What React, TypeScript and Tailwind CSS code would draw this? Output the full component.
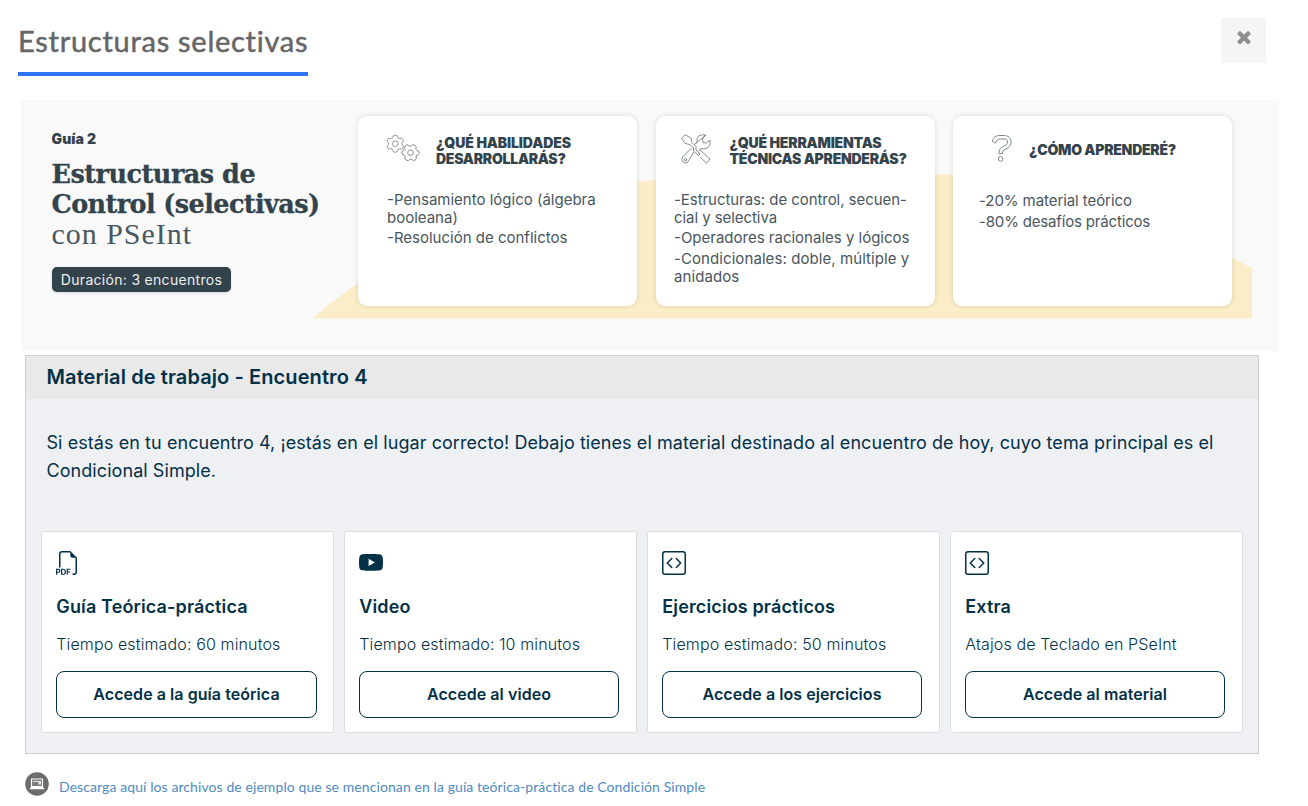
import React from "react";
import { BsCodeSquare, BsFiletypePdf, BsYoutube } from "react-icons/bs";

const GEAR =
  "M-2.200 -7.800Q0 -9.500 2.200 -7.800L2.800 -5.700 4.600 -5 6.600 -5.400Q8.500 -4 7.800 -2L6.400 0 7.800 2Q8.500 4 6.600 5.400L4.600 5 2.800 5.700 2.200 7.800Q0 9.500 -2.200 7.800L-2.800 5.700 -4.600 5 -6.600 5.400Q-8.500 4 -7.800 2L-6.400 0 -7.800 -2Q-8.500 -4 -6.600 -5.400L-4.600 -5 -2.800 -5.700Z";

function Gears() {
  return (
    <svg className="h-[30px] w-[34px]" viewBox="0 0 34 30" fill="none" stroke="#7d868b" strokeWidth="0.85" strokeLinejoin="round">
      <g transform="translate(9.300 9.700)"><path d={GEAR} /><circle r="2.800" /></g>
      <g transform="translate(24.500 18.700) rotate(30)"><path d={GEAR} /><circle r="2.800" /></g>
    </svg>
  );
}

function Tools() {
  return (
    <svg className="h-[30px] w-[30px]" viewBox="0 0 30 30" fill="none" stroke="#6f797e" strokeWidth="0.85" strokeLinejoin="round" strokeLinecap="round">
      <path d="M.8 4 4 .8 10 4 11 8.500 15 12.500V16L19 20 17.500 21.500 12.500 17V13.500L8.500 10.500 4.500 9.500Z" />
      <path d="M18.500 15.500 29 25 25.500 29.200 19.500 23.500" />
      <path d="M24.500 1 21.500 5 22 8.500 25.500 9 29 6Q30 11.500 26 14 22.500 15.500 20 14.500L18 16.500M12.500 18.500 6.500 28.500Q3.500 30 1.500 27.500.2 25 1.500 23L10 14.500M14 10 16 8.500Q15 4 18 1.800 21 0 24.500 1Z" />
      <circle cx="4.500" cy="25.700" r="1.200" />
    </svg>
  );
}

function Question() {
  return (
    <svg className="h-[27px] w-5" viewBox="0 0 20 27" fill="none" stroke="#6f797e" strokeWidth="0.9" strokeLinejoin="round">
      <path d="M.5 6C1 2 4 .5 8 .5h4c4 0 7 2.500 7 6.500 0 4-2 5.500-5 7-3 1.400-3.500 2-3.500 4.500H7c0-4 1-5.500 4.500-7.200C14 10 15.500 9.500 15.500 7S14 4 12 4H8C6 4 4.500 5 4 7.500 2.500 8.500 1 7.500.5 6Z" />
      <circle cx="8.700" cy="24" r="2.300" />
    </svg>
  );
}

function Laptop() {
  return (
    <svg className="size-6" viewBox="0 0 24 24">
      <circle cx="12" cy="12" r="11.800" fill="#6d6d6d" />
      <path d="M6.500 7h11v7.500h-11z" fill="#7c7c7c" stroke="#fff" strokeWidth="1.100" />
      <path d="M8 9h8v1H8zM13.500 10h2.500v2.500h-2.500z" fill="#e4e4e4" />
      <path d="M6 14.800h12.200l1.300 2.400h-15z" fill="#fff" />
    </svg>
  );
}

const heading = "font-[Inter,sans-serif] text-[14px] font-black leading-4 text-[#33434c]";
const body = "font-[Inter,sans-serif] text-[15px] leading-[18px] text-[#4a565d]";
const infoCard = "h-[190px] w-[279px] shrink-0 rounded-[9px] bg-white shadow-[0_0_5px_rgba(70,70,60,0.18)]";

function Banner() {
  return (
    <section className="relative ml-[21px] mt-6 h-[251px] w-[1258px] bg-[#f9f9f9]">
      <svg className="absolute left-0 top-0 h-[219px] w-[1231px]" viewBox="0 0 1231 219">
        <path d="M291 218.500C392 135 500 88 635 80C705 77 735 95 795 95C850 95 870 70 930 75C1030 80 1140 120 1231 168V218.500Z" fill="#faedc7" />
      </svg>
      <div className="relative flex pl-[30px] pt-4">
        <div className="w-[307px] shrink-0 pl-[0.500px] pt-[15px] text-[#33434c]">
          <p className="font-[Inter,sans-serif] text-[14px] font-black leading-4 tracking-[0.100px]">Guía 2</p>
          <h1 className="mt-3 whitespace-nowrap font-['DejaVu_Serif',serif] text-[25.500px] font-bold leading-[30px] tracking-[-0.600px] [-webkit-text-stroke:0.300px_#33434c]">
            <span className="block tracking-[-0.500px]">Estructuras de</span>
            <span className="block">Control (selectivas)</span>
            <span className="block font-['Liberation_Serif',serif] text-[30px] font-normal tracking-[0.960px] text-[#4a585f] [-webkit-text-stroke:0px]">con PSeInt</span>
          </h1>
          <div className="mt-[18px] flex h-[25px] w-[179px] items-center justify-center rounded-[5px] bg-[#33434c] pl-px font-[Inter,sans-serif] text-[14px] tracking-[0.300px] text-[#edf0f1] shadow-sm">
            <span className="whitespace-nowrap">Duración: 3 encuentros</span>
          </div>
        </div>
        <div className="flex gap-[18.500px]">
          <article className={infoCard}>
            <div className="flex h-[65px] items-center pl-[28px]">
              <Gears />
              <h2 className={heading + " ml-4 whitespace-nowrap pt-1 tracking-[-0.100px]"}>¿QUÉ HABILIDADES<br /><span className="tracking-[-0.250px]">DESARROLLARÁS?</span></h2>
            </div>
            <div className={body + " whitespace-nowrap pl-[29px] pt-[10px]"}>
              <p>-Pensamiento lógico (álgebra<br />booleana)</p>
              <p className="mt-0.5">-Resolución de conflictos</p>
            </div>
          </article>
          <article className={infoCard}>
            <div className="flex h-[65px] items-center pl-[25px]">
              <Tools />
              <h2 className={heading + " ml-[19px] whitespace-nowrap pt-1 tracking-[-0.180px]"}>¿QUÉ HERRAMIENTAS<br /><span className="tracking-[-0.240px]">TÉCNICAS APRENDERÁS?</span></h2>
            </div>
            <div className={body + " whitespace-nowrap pl-[18.500px] pt-[10px]"}>
              <p className="tracking-[-0.060px]">-Estructuras: de control, secuen-<br />cial y selectiva</p>
              <p className="mt-0.5">-Operadores racionales y lógicos</p>
              <p className="mt-[3px] tracking-[0.080px]">-Condicionales: doble, múltiple y<br />anidados</p>
            </div>
          </article>
          <article className={infoCard}>
            <div className="flex h-[65px] items-center pl-[38.500px]">
              <Question />
              <h2 className={heading + " ml-[17.500px] whitespace-nowrap pt-0.5 tracking-[-0.240px]"}>¿CÓMO APRENDERÉ?</h2>
            </div>
            <div className={body + " whitespace-nowrap pl-[26px] pt-[11px]"}>
              <p className="tracking-[-0.070px]">-20% material teórico</p>
              <p className="mt-[2.500px] tracking-[-0.170px]">-80% desafíos prácticos</p>
            </div>
          </article>
        </div>
      </div>
    </section>
  );
}

const materials = [
  { Icon: BsFiletypePdf, title: "Guía Teórica-práctica", detail: "Tiempo estimado: 60 minutos", action: "Accede a la guía teórica", width: "w-[261px]" },
  { Icon: BsYoutube, title: "Video", detail: "Tiempo estimado: 10 minutos", action: "Accede al video", width: "w-[260px]" },
  { Icon: BsCodeSquare, title: "Ejercicios prácticos", detail: "Tiempo estimado: 50 minutos", action: "Accede a los ejercicios", width: "w-[260px]" },
  { Icon: BsCodeSquare, title: "Extra", detail: "Atajos de Teclado en PSeInt", action: "Accede al material", width: "w-[260px]" },
];

export default function App() {
  return (
    <main className="h-[806px] w-full overflow-hidden bg-white font-[Inter,sans-serif] text-[#033148]">
      <header className="flex h-[76px] justify-between pl-[18px] pr-[42px] pt-[18px]">
        <div className="h-[58px] w-[290px] border-b-4 border-[#2b74f6]">
          <h1 className="whitespace-nowrap font-[Lato,sans-serif] text-[29px] leading-[46px] tracking-[0.730px] text-[#666] [-webkit-text-stroke:0.500px_#666]">Estructuras selectivas</h1>
        </div>
        <button className="flex h-[45px] w-[45px] items-start justify-center bg-[#f5f5f5] pt-[9px]" aria-label="Cerrar">
          <svg className="ml-px size-5" viewBox="0 0 1792 1792" fill="#8f8f8f">
            <path d="M1490 1322q0 40-28 68l-136 136q-28 28-68 28t-68-28l-294-294-294 294q-28 28-68 28t-68-28l-136-136q-28-28-28-68t28-68l294-294-294-294q-28-28-28-68t28-68l136-136q28-28 68-28t68 28l294 294 294-294q28-28 68-28t68 28l136 136q28 28 28 68t-28 68l-294 294 294 294q28 28 28 68z" />
          </svg>
        </button>
      </header>
      <Banner />
      <section className="ml-[25px] mt-1 h-[399px] w-[1234px] border border-[#cecfd1] bg-[#eff0f4]">
        <h2 className="h-[43px] bg-[#e9e9e9] pl-[20.500px] text-[20px] font-semibold leading-[43px] tracking-[0.100px]">Material de trabajo - Encuentro 4</h2>
        <p className="h-[132px] whitespace-nowrap pl-[20.500px] pt-[30px] text-[18px] leading-7 tracking-[0.067px]">
          Si estás en tu encuentro 4, ¡estás en el lugar correcto! Debajo tienes el material destinado al encuentro de hoy, cuyo tema principal es el<br />Condicional Simple.
        </p>
        <div className="grid w-[1217px] grid-cols-4 gap-[10px] pl-[15px]">
          {materials.map(({ Icon, title, detail, action, width }) => (
            <article key={title} className="h-[202px] rounded-[3px] border border-[#dddee0] bg-white pl-[14px] pt-[19px]">
              <Icon className="size-6" />
              <h3 className="mt-[18px] pl-[0.300px] text-[18px] font-semibold leading-7 tracking-[0.130px]">{title}</h3>
              <p className="mt-[11px] pl-[0.300px] text-[16px] font-light leading-6 tracking-[0.130px]">{detail}</p>
              <button className={width + " mt-[15px] h-[47px] rounded-[8px] border border-[#033148] pb-[2px] text-[16px] font-semibold tracking-[0.060px]"}>{action}</button>
            </article>
          ))}
        </div>
      </section>
      <div className="ml-[25px] mt-[18px] flex">
        <Laptop />
        <a className="ml-[10px] mt-[5px] whitespace-nowrap font-[Lato,sans-serif] text-[14px] leading-5 tracking-[0.086px] text-[#4f8bc4]">Descarga aquí los archivos de ejemplo que se mencionan en la guía teórica-práctica de Condición Simple</a>
      </div>
    </main>
  );
}
